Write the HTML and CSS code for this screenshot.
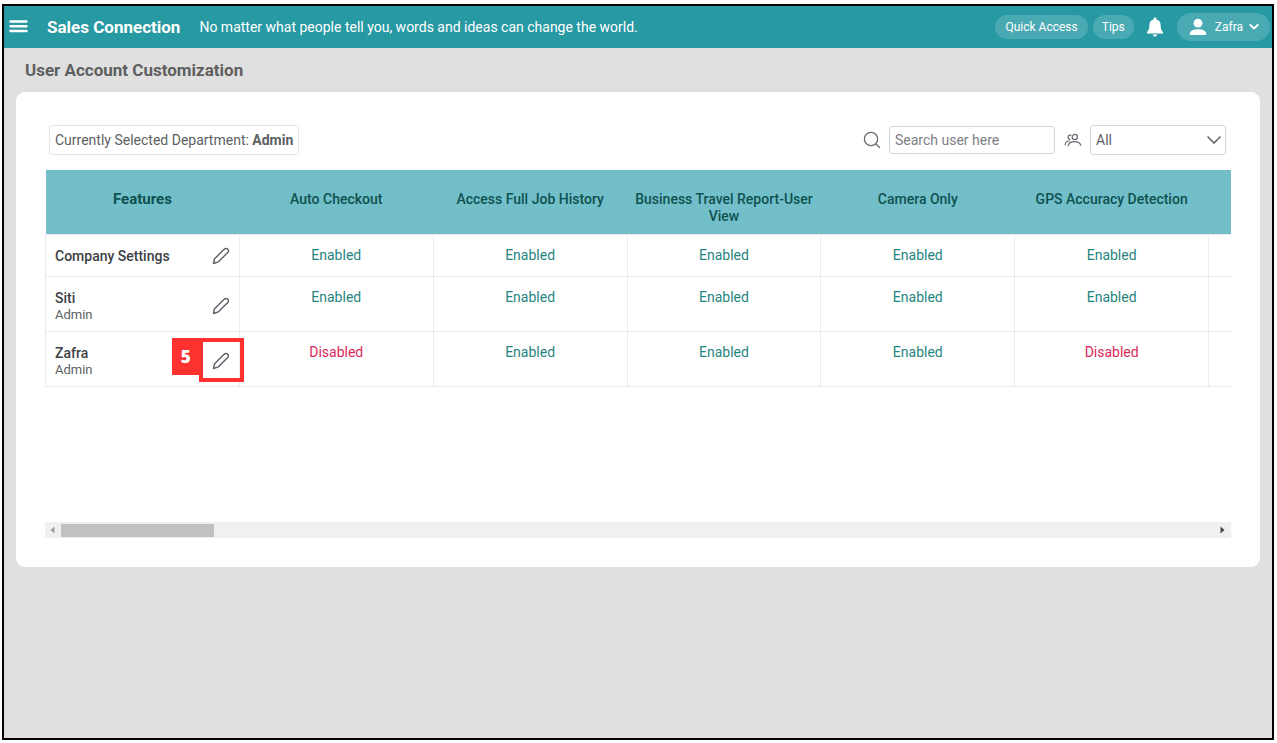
FILE: index.html
```html
<!DOCTYPE html>
<html lang="en">
<head>
<meta charset="utf-8">
<meta name="viewport" content="width=device-width, initial-scale=1">
<title>User Account Customization</title>
<link rel="stylesheet" href="styles.css">
</head>
<body>
<svg class="sprite" aria-hidden="true">
  <symbol id="pencil" viewBox="0 0 18 18">
    <path d="M1.500 16.500 L2.400 12 L11.600 2.800 Q13.600 1 15.400 1.800 Q17.200 3 16 5.200 L6.400 14.800 Z" fill="none" stroke="currentColor" stroke-width="1.400" stroke-linejoin="round"/>
  </symbol>
</svg>
<div class="app">
  <header class="topbar">
    <button class="icon-button menu" aria-label="Menu">
      <svg width="19" height="14" viewBox="0 0 19 14"><path d="M1.500 1.500h16M1.500 6.200h16M1.500 11h16" stroke="#fff" stroke-width="2.400" stroke-linecap="round"/></svg>
    </button>
    <span class="brand">Sales Connection</span>
    <span class="quote">No matter what people tell you, words and ideas can change the world.</span>
    <button class="pill quick">Quick Access</button>
    <button class="pill">Tips</button>
    <button class="icon-button bell" aria-label="Notifications">
      <svg width="18" height="20" viewBox="0 0 18 20"><path d="M9 .5c.9 0 1.500.6 1.500 1.500v.6c2.700.700 4.200 3 4.200 5.800 0 4 1 5.300 2.300 6.600v1.500H1V15c1.300-1.300 2.300-2.600 2.300-6.600 0-2.800 1.500-5.100 4.200-5.800V2C7.500 1.100 8.100.5 9 .5zM6.800 17.500h4.400C11.200 18.800 10.200 19.600 9 19.600s-2.200-.8-2.200-2.100z" fill="#fff"/></svg>
    </button>
    <button class="pill user">
      <svg width="18" height="18" viewBox="0 0 18 18"><circle cx="9" cy="5.200" r="4.400" fill="#fff"/><path d="M.8 17v-1.500C.8 12.600 5 11.200 9 11.200s8.200 1.400 8.200 4.300V17z" fill="#fff"/></svg>
      <span>Zafra</span>
      <svg width="10" height="8" viewBox="0 0 10 8"><path d="M1.300 2l3.700 3.500L8.700 2" fill="none" stroke="#fff" stroke-width="1.900" stroke-linecap="round"/></svg>
    </button>
  </header>

  <main class="page">
    <h1 class="page-title">User Account Customization</h1>
    <section class="card">
      <div class="toolbar">
        <div class="department">Currently Selected Department: <b>Admin</b></div>
        <div class="filters">
          <label class="filter-icon" for="search" aria-label="Search user">
            <svg width="18" height="18" viewBox="0 0 18 18"><g fill="none" stroke="#666b70" stroke-width="1.300" stroke-linecap="round"><circle cx="8" cy="8" r="6.600"/><path d="M13 13l3.500 3.500"/></g></svg>
          </label>
          <input class="field search" id="search" type="text" placeholder="Search user here">
          <label class="filter-icon group" for="group" aria-label="User group">
            <svg width="18" height="14" viewBox="0 0 18 14"><g fill="none" stroke="#666b70" stroke-width="1.200" stroke-linecap="round" stroke-linejoin="round"><circle cx="10.800" cy="4" r="2.600"/><path d="M4.300 12.600c.6-2.800 3-4 6.200-4s5.500 1.100 6.300 3.600"/><path d="M7 2.200C5 1.800 4 2.800 4 4.200s.8 2 2 2.200M1.200 11.600c.3-2.300 1.700-3.500 4.200-3.600"/></g></svg>
          </label>
          <span class="select-box">
            <select class="field select" id="group"><option>All</option></select>
            <svg class="chevron" width="16" height="10" viewBox="0 0 16 10"><path d="M1.500 1.500L8 8l6.500-6.500" fill="none" stroke="#6a6e72" stroke-width="1.700"/></svg>
          </span>
        </div>
      </div>

      <div class="table-area">
        <table class="features">
          <thead>
            <tr><th class="first">Features</th><th>Auto Checkout</th><th>Access Full Job History</th><th>Business Travel Report-User View</th><th>Camera Only</th><th>GPS Accuracy Detection</th><th></th></tr>
          </thead>
          <tbody>
            <tr>
              <th scope="row"><div class="who"><div class="name">Company Settings</div><button class="edit" aria-label="Edit Company Settings"><svg width="18" height="18"><use href="#pencil"/></svg></button></div></th>
              <td>Enabled</td><td>Enabled</td><td>Enabled</td><td>Enabled</td><td>Enabled</td><td></td>
            </tr>
            <tr>
              <th scope="row"><div class="who"><div><div class="name">Siti</div><div class="role">Admin</div></div><button class="edit" aria-label="Edit Siti"><svg width="18" height="18"><use href="#pencil"/></svg></button></div></th>
              <td>Enabled</td><td>Enabled</td><td>Enabled</td><td>Enabled</td><td>Enabled</td><td></td>
            </tr>
            <tr>
              <th scope="row"><div class="who"><div><div class="name">Zafra</div><div class="role">Admin</div></div><button class="edit" aria-label="Edit Zafra"><svg width="18" height="18"><use href="#pencil"/></svg></button>
                <span class="callout"></span><span class="step">5</span></div></th>
              <td class="off">Disabled</td><td>Enabled</td><td>Enabled</td><td>Enabled</td><td class="off">Disabled</td><td></td>
            </tr>
          </tbody>
        </table>
      </div>
      <div class="scrollbar">
        <svg width="5" height="8" viewBox="0 0 5 8"><path d="M4.500.5v7L.5 4z" fill="#999"/></svg>
        <div class="thumb"></div>
        <svg class="right" width="5" height="8" viewBox="0 0 5 8"><path d="M.5.500v7l4-3.500z" fill="#444"/></svg>
      </div>
    </section>
  </main>
</div>
</body>
</html>
```
FILE: styles.css
```css
* { box-sizing: border-box; }

body {
  margin: 0;
  padding: 4px 3px 3px 2px;
  background: #fff;
  font-family: Roboto, "Liberation Sans", sans-serif;
  font-size: 14px;
  line-height: 17px;
  color: #5c5f63;
}

button { border: 0; padding: 0; background: none; color: inherit; font: inherit; cursor: pointer; }
svg { display: block; flex: none; }
.sprite { position: absolute; width: 0; height: 0; }

.app {
  min-height: calc(100vh - 7px);
  border: 2px solid #000;
  background: #e0e0e0;
}

.topbar {
  display: flex;
  align-items: center;
  height: 42px;
  padding: 0 2px 0 5px;
  background: #2799a3;
  color: #fff;
}
.brand { margin-left: 19px; font-size: 17px; font-weight: 700; line-height: 22px; white-space: nowrap; }
.quote { margin-left: 19px; margin-right: auto; white-space: nowrap; }
.pill {
  height: 24px;
  padding: 0 9px;
  border-radius: 14px;
  background: #4aaab3;
  font-size: 12px;
  white-space: nowrap;
}
.quick { padding: 0 10px; margin-right: 5px; }
.bell { margin: 0 13px 0 12px; }
.user { display: flex; align-items: center; height: 28px; padding: 0 11px 0 12px; gap: 8px; }
.user svg:last-child { margin-left: -2px; }

.page { padding: 0 12px; }
.page-title { margin: 0; padding: 11px 9px; font-size: 17px; font-weight: 700; line-height: 22px; color: #5f5f5f; }
.card { padding: 33px 29px 29px; border-radius: 9px; background: #fff; }

.toolbar { display: flex; align-items: center; justify-content: space-between; padding: 0 5px 15px 4px; }
.department { height: 30px; padding: 0 5px; border: 1px solid #e4e4e6; border-radius: 3px; line-height: 28px; }
.filters { display: flex; align-items: center; }
.filter-icon { margin-right: 8px; }
.group { margin-left: 9px; }
.field {
  height: 28px;
  padding: 0 5px;
  border: 1px solid #d5d7dd;
  border-radius: 3px;
  background: #fff;
  color: #5c5f63;
  font: inherit;
}
.field::placeholder { color: #7c8085; opacity: 1; }
.search { width: 166px; }
.select-box { position: relative; }
.select { display: block; width: 136px; height: 30px; appearance: none; }
.chevron { position: absolute; right: 4px; top: 10px; pointer-events: none; }

.table-area { min-height: 352px; overflow: hidden; }
.features { width: 1358px; table-layout: fixed; border-collapse: collapse; }
.features thead th {
  height: 64px;
  padding: 21px 8px 0;
  background: #72bec9;
  color: #0e5250;
  font-weight: 500;
  vertical-align: top;
}
.features thead .first { font-size: 15px; font-weight: 700; }
.features tbody th,
.features td { border: 1px solid #e9ebee; padding: 12px 9px 8px; vertical-align: top; }
.features tbody tr:first-child th { padding-bottom: 11px; }
.features tbody th { text-align: left; font-weight: 400; }
.features td { text-align: center; color: #1f8580; }
.features .off { color: #dc2859; }
.who { position: relative; display: flex; align-items: center; justify-content: space-between; }
.name { font-weight: 500; line-height: 18px; color: #3c4045; }
.role { font-size: 13px; line-height: 16px; }
.edit { color: #5c5f66; }
.callout { position: absolute; right: -14px; top: -6px; width: 45px; height: 44px; border: 4px solid #fe3131; pointer-events: none; }
.step { position: absolute; right: 30px; top: -6px; width: 28px; height: 37px; background: #fe3131; color: #fff; font: 800 17px/37px "Open Sans", sans-serif; text-align: center; }

.scrollbar { display: flex; align-items: center; height: 16px; padding: 0 6px 0 5px; background: #f0f0f0; }
.thumb { width: 153px; height: 13px; margin-left: 6px; background: #c1c1c1; }
.right { margin-left: auto; }
```
